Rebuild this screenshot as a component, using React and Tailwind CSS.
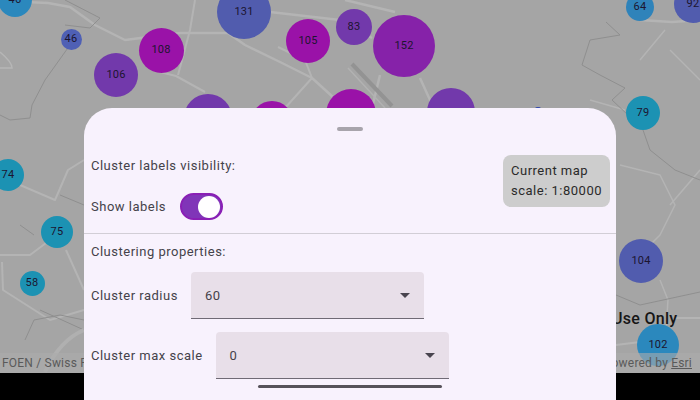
import React from 'react';

const clusters = [
  { label: '46', x: 15, y: 0, r: 17, color: 'bg-[#2b88bd]' },
  { label: '46', x: 71, y: 39, r: 10.5, color: 'bg-[#4f60b5]' },
  { label: '108', x: 161, y: 50, r: 22.5, color: 'bg-[#9a12a8]' },
  { label: '106', x: 116, y: 75, r: 22, color: 'bg-[#7239ab]' },
  { label: '131', x: 244, y: 12, r: 27, color: 'bg-[#515cae]' },
  { label: '105', x: 308, y: 41, r: 22, color: 'bg-[#9a12a8]' },
  { label: '83', x: 354, y: 27, r: 18, color: 'bg-[#7239ab]' },
  { label: '152', x: 404, y: 46, r: 31, color: 'bg-[#8622a9]' },
  { label: '', x: 208, y: 118, r: 24, color: 'bg-[#7239ab]' },
  { label: '', x: 272, y: 122, r: 21, color: 'bg-[#9a12a8]' },
  { label: '', x: 351, y: 114, r: 25, color: 'bg-[#9a12a8]' },
  { label: '', x: 451, y: 112, r: 24, color: 'bg-[#7239ab]' },
  { label: '', x: 538, y: 112, r: 5, color: 'bg-[#2f46b0]' },
  { label: '64', x: 640, y: 7, r: 14, color: 'bg-[#2f83ba]' },
  { label: '92', x: 693, y: 4, r: 19, color: 'bg-[#515cae]' },
  { label: '79', x: 643, y: 113, r: 17, color: 'bg-[#1c92b3]' },
  { label: '74', x: 8, y: 175, r: 16, color: 'bg-[#1c92b3]' },
  { label: '75', x: 57, y: 232, r: 16, color: 'bg-[#1c92b3]' },
  { label: '58', x: 32, y: 283, r: 12.5, color: 'bg-[#1c92b3]' },
  { label: '104', x: 641, y: 261, r: 22, color: 'bg-[#515cae]' },
  { label: '102', x: 658, y: 345, r: 21, color: 'bg-[#2b88bd]' },
];

function MapRoads() {
  return (
    <svg className="absolute inset-0" width="700" height="373" fill="none">
      <g stroke="#b4b4b4" strokeWidth="2.5" strokeLinejoin="round">
        <path d="M25 2 L48 3 L70 7 L95 25 L125 40 L180 33 L228 33 L245 45 L280 62 L312 78 L345 108" />
        <path d="M195 0 L190 30 L178 75" strokeWidth="2" />
        <path d="M160 72 L176 76 L205 92" strokeWidth="2" />
        <path d="M278 47 L305 60 L312 78 L285 108" strokeWidth="2" />
        <path d="M270 12 L340 20 L372 38 M345 0 L395 12" />
        <path d="M380 75 L372 108 M420 78 L430 100 L432 108" />
        <path d="M640 20 L672 22 L700 20" />
        <path d="M20 185 L55 200 L68 170 L84 160" strokeWidth="2" />
        <path d="M66 250 L84 290" strokeWidth="2" />
        <path d="M0 255 L30 255 L50 240 M2 262 L3 290 L50 320 L84 310" strokeWidth="2" />
        <path d="M620 165 L660 175 L675 205 L660 235 L650 245" strokeWidth="1.5" />
        <path d="M660 280 L668 300 L666 330" strokeWidth="1.5" />
        <path d="M616 345 L640 342 M675 318 L700 318" strokeWidth="2" />
        <path d="M670 205 L700 170 M665 30 L640 60" strokeWidth="1.5" />
        <path d="M670 50 L700 80 M625 110 L590 100" strokeWidth="1.5" />
      </g>
      <g stroke="#8f8f8f" strokeWidth="1">
        <path d="M70 45 L45 80 L32 105 L30 118 L10 120 L0 115" />
        <path d="M65 0 L100 18 L90 28 L65 25" />
        <path d="M606 22 L620 35 L590 40 L582 65 L600 75 L625 88 L612 100 L628 115" />
        <path d="M643 130 L650 150 L675 170 L700 180" />
        <path d="M20 225 L34 235 M60 195 L84 205 M40 310 L84 330 M25 340 L34 320 L60 315 L84 320" />
        <path d="M616 295 L640 305 L700 292" />
      </g>
      <path d="M0 52 Q12 62 12 68 L0 68" stroke="#b6b6b6" strokeWidth="1.5" />
      <path d="M84 330 Q60 340 45 372" stroke="#b0b0b0" strokeWidth="4" />
      <path d="M352 64 L392 106" stroke="#939393" strokeWidth="4" />
      <path d="M348 68 L385 108" stroke="#b2b2b2" strokeWidth="1.5" />
    </svg>
  );
}

function Cluster({ label, x, y, r, color }) {
  return (
    <div
      className={`absolute rounded-full flex items-center justify-center text-[11px] tracking-[0.2px] text-[#1c1530] ${color}`}
      style={{ left: x - r, top: y - r, width: r * 2, height: r * 2 }}
    >
      {label}
    </div>
  );
}

function Dropdown({ label, value }) {
  return (
    <div className="flex items-center gap-[13px]">
      <span className="pt-px">{label}</span>
      <div className="w-[233px] h-[47px] pl-[14px] pr-[14px] bg-[#e8dfe9] rounded-t-[4px] border-b border-[#6f6a75] flex items-center justify-between">
        <span className="pt-px">{value}</span>
        <div className="w-0 h-0 border-x-[5px] border-x-transparent border-t-[5px] border-t-[#49454f]" />
      </div>
    </div>
  );
}

export default function App() {
  return (
    <div className="relative w-[700px] h-[400px] overflow-hidden bg-black font-['Roboto',sans-serif]">
      <div className="relative h-[373px] bg-[#a5a5a5] overflow-hidden">
        <MapRoads />
        {clusters.map((c, i) => (
          <Cluster key={i} {...c} />
        ))}
        <div className="absolute left-[612px] top-[309px] text-[16px] leading-5 font-medium tracking-[0.3px] text-[#161616]">Use Only</div>
        <div className="absolute left-0 right-0 bottom-0 h-[20px] bg-[#acacac]/60 flex items-center justify-between pl-[2px] pr-[8px] text-[12px] tracking-[0.2px] text-[#5a5a5a]">
          <span>FOEN / Swiss Parks</span>
          <span>Powered by <span className="underline">Esri</span></span>
        </div>
      </div>

      <div className="absolute left-[84px] top-[108px] w-[532px] h-[292px] bg-[#f8f2fd] rounded-t-[28px] flex flex-col text-[13px] tracking-[0.5px] text-[#45424a]">
        <div className="h-[47px] pt-[19px] flex justify-center shrink-0">
          <div className="w-[26px] h-[4px] rounded-full bg-[#a8a4ac]" />
        </div>
        <div className="h-[78px] pl-[7px] pr-[6px] flex justify-between shrink-0">
          <div className="flex flex-col pt-px">
            <div className="h-[20px] leading-[20px]">Cluster labels visibility:</div>
            <div className="mt-[17px] flex items-center gap-[14px]">
              <span>Show labels</span>
              <div className="w-[43px] h-[27px] rounded-full bg-[#8035b8] border-2 border-[#8a1fb5] flex items-center justify-end pr-[1px]">
                <div className="w-[22px] h-[22px] rounded-full bg-white" />
              </div>
            </div>
          </div>
          <div className="w-[107px] h-[52px] rounded-[8px] bg-[#cdcdcd] px-[8px] py-[6px] text-[#2a2a2a] leading-[20px] whitespace-nowrap">
            <div>Current map</div>
            <div>scale: 1:80000</div>
          </div>
        </div>
        <div className="h-px bg-[#d2ced6] shrink-0" />
        <div className="pl-[7px] pt-[8px] flex flex-col">
          <div className="h-[20px] leading-[20px]">Clustering properties:</div>
          <div className="mt-[10px] flex flex-col gap-[13px]">
            <Dropdown label="Cluster radius" value="60" />
            <Dropdown label="Cluster max scale" value="0" />
          </div>
        </div>
        <div className="absolute left-[174px] top-[277px] w-[184px] h-[3px] rounded-full bg-[#56525a]" />
      </div>
    </div>
  );
}
